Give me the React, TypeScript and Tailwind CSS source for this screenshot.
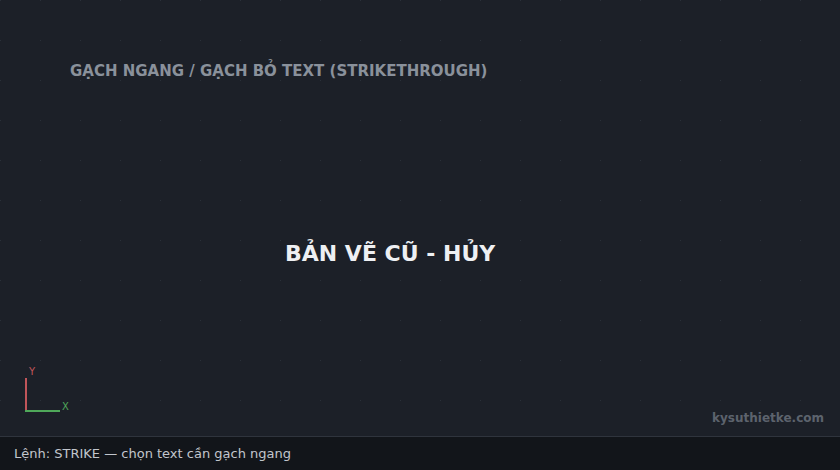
// UCS icon in the lower-left corner of the model space
function AxisIcon() {
  return (
    <svg width="48" height="46" viewBox="0 0 48 46" className="block">
      <rect x="0" y="11" width="2" height="34" fill="#c0555a" />
      <rect x="0" y="43" width="35" height="2" fill="#4fa85a" />
      <text x="4" y="8" fontSize="10" fill="#c0555a" fontFamily="DejaVu Sans, sans-serif">Y</text>
      <text x="37" y="43" fontSize="10" fill="#4fa85a" fontFamily="DejaVu Sans, sans-serif">X</text>
    </svg>
  )
}

export default function App() {
  return (
    <div
      className="flex h-[470px] w-[840px] flex-col overflow-hidden bg-[#1c2028] text-white"
      style={{ fontFamily: '"DejaVu Sans", "Noto Sans", sans-serif' }}
    >
      {/* model space with dot grid */}
      <div className="flex flex-1 flex-col bg-[radial-gradient(circle_at_0_0,#2a3039_1.5px,transparent_1.5px)] bg-[size:40px_40px]">
        <div className="ml-[70px] mt-[60px] text-[15px] font-bold text-[#8a919b]">
          GẠCH NGANG / GẠCH BỎ TEXT (STRIKETHROUGH)
        </div>

        <div className="ml-[285px] mt-[154px] text-[22px] font-bold text-[#eef0f3]">
          BẢN VẼ CŨ - HỦY
        </div>

        <div className="flex flex-1 items-end justify-between pb-[9px] pl-[25px] pr-[16px]">
          <div className="mb-[14px]">
            <AxisIcon />
          </div>
          <div className="text-[12px] font-bold text-[#5c636d]">kysuthietke.com</div>
        </div>
      </div>

      {/* command line */}
      <div className="flex h-[34px] items-center border-t border-[#2f343d] bg-[#12151a] px-[14px] text-[13px] text-[#c2c6cd]">
        Lệnh: STRIKE — chọn text cần gạch ngang
      </div>
    </div>
  )
}
